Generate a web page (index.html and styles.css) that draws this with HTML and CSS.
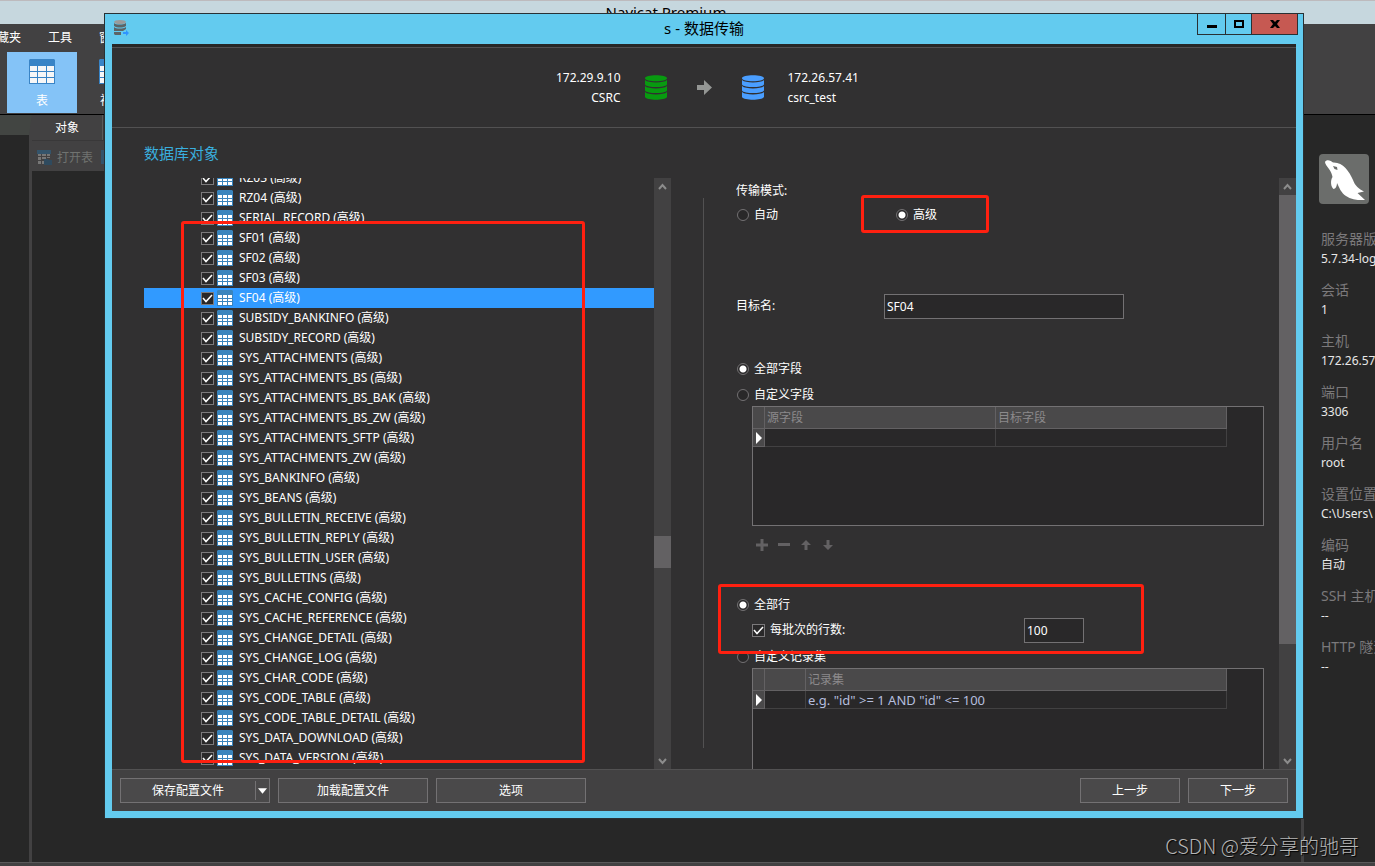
FILE: index.html
```html
<!DOCTYPE html>
<html lang="zh-CN">
<head>
<meta charset="utf-8">
<meta name="viewport" content="width=device-width, initial-scale=1">
<title>Navicat Premium</title>
<link rel="stylesheet" href="styles.css">
</head>
<body>
<svg class="symbols" aria-hidden="true">
  <symbol id="i-table" viewBox="0 0 16 16"><path fill="#3984bd" d="M1 0h14l1 1v15H0V1z"/><path fill="#fff" d="M1 5h4v3H1zM6 5h4v3H6zM11 5h4v3h-4zM1 9h4v2H1zM6 9h4v2H6zM11 9h4v2h-4zM1 12h4v3H1zM6 12h4v3H6zM11 12h4v3h-4z"/></symbol>
  <symbol id="i-table-lg" viewBox="0 0 26 25"><path fill="#3984c6" d="M1 0h24l1 1v24H0V1z"/><path fill="#f7f7f7" d="M1 7h7v5H1zM9 7h8v5H9zM18 7h7v5h-7zM1 13h7v5H1zM9 13h8v5H9zM18 13h7v5h-7zM1 19h7v5H1zM9 19h8v5H9zM18 19h7v5h-7z"/></symbol>
  <symbol id="i-db" viewBox="0 0 22 25"><path d="M0 3.300C0 1.500 5 .300 11 .300s11 1.200 11 3S17 6.300 11 6.300 0 5.100 0 3.300zM0 5c2 1.800 6 2.400 11 2.400S20 6.800 22 5v4.500c-1 1.800-6 2.600-11 2.600S1 11.300 0 9.500zM0 11c2 1.800 6 2.400 11 2.400s9-.600 11-2.400v4.500c-1 1.800-6 2.600-11 2.600S1 17.300 0 15.500zM0 17c2 1.800 6 2.400 11 2.400s9-.600 11-2.400v5c-1 1.800-6 2.700-11 2.700S1 23.800 0 22z"/></symbol>
  <symbol id="i-up" viewBox="0 0 9 8"><path fill="none" stroke="#8c8c8c" stroke-width="2" d="M1 6l3.500-4L8 6"/></symbol>
  <symbol id="i-down" viewBox="0 0 9 8"><path fill="none" stroke="#8c8c8c" stroke-width="2" d="M1 2l3.500 4L8 2"/></symbol>
</svg>

<div class="app">
  <header class="app-title">Navicat Premium</header>
  <nav class="menubar"><a href="#">收藏夹</a><a href="#">工具</a><a href="#">窗口</a></nav>
  <div class="toolbar">
    <button class="tool tool-active"><svg class="tool-icon"><use href="#i-table-lg"/></svg>表</button>
    <button class="tool"><svg class="tool-icon"><use href="#i-table-lg"/></svg>视图</button>
  </div>
  <div class="workspace">
    <aside class="nav-pane"></aside>
    <main class="objects">
      <div class="tabs"><button class="tab">对象</button></div>
      <div class="object-bar">
        <button class="object-tool" disabled><svg class="open-icon" viewBox="0 0 16 16"><path fill="#34546b" d="M0 0h14v4H0z"/><path fill="#777" d="M1 4h3v2H1zM5 4h4v2H5zM10 4h3v2h-3zM1 7h3v3H1zM5 7h4v2H5zM10 7h3v1h-3zM1 11h3v3H1zM5 11h2v3H5z"/><path fill="#2f4a5e" d="M7 9h4l1 1h3v5H7z"/></svg>打开表</button>
        <button class="object-tool" disabled><svg class="open-icon" viewBox="0 0 16 16"><path fill="#34546b" d="M0 0h14v14H0z"/></svg>设计表</button>
      </div>
    </main>
    <aside class="info">
      <svg class="logo" viewBox="0 0 50 50"><path fill="#fff" d="M6 8C7 5 12 6 14 8.500C24 8 30 17 34 26C36 32 40 35 45 37.500L38.500 39L46 46C40 46.500 32 45.500 27 42C22 39 20 33 18 29C18 32 16.500 35 14.500 35C12 33 11 27 13.500 23C13 20 12 18 10 15C8 12 6 10 6 8z"/><path fill="#6b6d6b" d="M14 12l4 1 .500 3-3-1z"/></svg>
      <dl class="facts">
        <dt>服务器版本</dt><dd>5.7.34-log</dd>
        <dt>会话</dt><dd>1</dd>
        <dt>主机</dt><dd>172.26.57.41</dd>
        <dt>端口</dt><dd>3306</dd>
        <dt>用户名</dt><dd>root</dd>
        <dt>设置位置</dt><dd>C:\Users\</dd>
        <dt>编码</dt><dd>自动</dd>
        <dt>SSH 主机</dt><dd>--</dd>
        <dt>HTTP 隧道</dt><dd>--</dd>
      </dl>
    </aside>
  </div>
  <footer class="statusbar"></footer>
</div>

<section class="dialog" role="dialog" aria-labelledby="dialog-title">
  <header class="dialog-title">
    <svg class="dialog-icon" viewBox="0 0 16 16"><path fill="#5d6466" d="M1 3c2 2 9 2 12 0v3c-3 2-9 2-12 0zM1 7c2 2 9 2 12 0v2l-3 2H1zM1 12h7v3H2l-1-1z"/><ellipse cx="7" cy="2" rx="6" ry="2" fill="#9b9b9b"/><path fill="#2f94ff" d="M10 12h3v-2l3 3-3 3v-2h-3z"/></svg>
    <h1 id="dialog-title">s - 数据传输</h1>
    <div class="window-controls">
      <button class="win-btn win-min" aria-label="最小化"><svg viewBox="0 0 10 8"><path d="M0 5h10v3H0z"/></svg></button>
      <button class="win-btn win-max" aria-label="最大化"><svg viewBox="0 0 10 8"><path fill-rule="evenodd" d="M0 0h10v8H0zM2 2v4h6V2z"/></svg></button>
      <button class="win-btn win-close" aria-label="关闭"><svg viewBox="0 0 10 8"><path d="M0 0h3l2 2 2-2h3L7 4l3 4H7L5 6 3 8H0l3-4z"/></svg></button>
    </div>
  </header>

  <div class="dialog-inner">
    <div class="route">
      <p class="source">172.29.9.10<br>CSRC</p>
      <div class="route-icons">
        <svg class="db db-source"><use href="#i-db"/></svg>
        <svg class="arrow" viewBox="0 0 15 15"><path d="M0 5h7V0l8 7.500L7 15v-5H0z"/></svg>
        <svg class="db db-target"><use href="#i-db"/></svg>
      </div>
      <p class="target">172.26.57.41<br>csrc_test</p>
    </div>

    <div class="panes">
      <section class="left-pane">
        <h2>数据库对象</h2>
        <div class="scroll-area">
          <div class="list-view">
          <div class="list">
            <label class="row"><input type="checkbox" class="check" checked><svg class="row-icon"><use href="#i-table"/></svg>RZ03 (高级)</label>
            <label class="row"><input type="checkbox" class="check" checked><svg class="row-icon"><use href="#i-table"/></svg>RZ04 (高级)</label>
            <label class="row"><input type="checkbox" class="check" checked><svg class="row-icon"><use href="#i-table"/></svg>SERIAL_RECORD (高级)</label>
            <label class="row"><input type="checkbox" class="check" checked><svg class="row-icon"><use href="#i-table"/></svg>SF01 (高级)</label>
            <label class="row"><input type="checkbox" class="check" checked><svg class="row-icon"><use href="#i-table"/></svg>SF02 (高级)</label>
            <label class="row"><input type="checkbox" class="check" checked><svg class="row-icon"><use href="#i-table"/></svg>SF03 (高级)</label>
            <label class="row row-selected"><input type="checkbox" class="check" checked><svg class="row-icon"><use href="#i-table"/></svg>SF04 (高级)</label>
            <label class="row"><input type="checkbox" class="check" checked><svg class="row-icon"><use href="#i-table"/></svg>SUBSIDY_BANKINFO (高级)</label>
            <label class="row"><input type="checkbox" class="check" checked><svg class="row-icon"><use href="#i-table"/></svg>SUBSIDY_RECORD (高级)</label>
            <label class="row"><input type="checkbox" class="check" checked><svg class="row-icon"><use href="#i-table"/></svg>SYS_ATTACHMENTS (高级)</label>
            <label class="row"><input type="checkbox" class="check" checked><svg class="row-icon"><use href="#i-table"/></svg>SYS_ATTACHMENTS_BS (高级)</label>
            <label class="row"><input type="checkbox" class="check" checked><svg class="row-icon"><use href="#i-table"/></svg>SYS_ATTACHMENTS_BS_BAK (高级)</label>
            <label class="row"><input type="checkbox" class="check" checked><svg class="row-icon"><use href="#i-table"/></svg>SYS_ATTACHMENTS_BS_ZW (高级)</label>
            <label class="row"><input type="checkbox" class="check" checked><svg class="row-icon"><use href="#i-table"/></svg>SYS_ATTACHMENTS_SFTP (高级)</label>
            <label class="row"><input type="checkbox" class="check" checked><svg class="row-icon"><use href="#i-table"/></svg>SYS_ATTACHMENTS_ZW (高级)</label>
            <label class="row"><input type="checkbox" class="check" checked><svg class="row-icon"><use href="#i-table"/></svg>SYS_BANKINFO (高级)</label>
            <label class="row"><input type="checkbox" class="check" checked><svg class="row-icon"><use href="#i-table"/></svg>SYS_BEANS (高级)</label>
            <label class="row"><input type="checkbox" class="check" checked><svg class="row-icon"><use href="#i-table"/></svg>SYS_BULLETIN_RECEIVE (高级)</label>
            <label class="row"><input type="checkbox" class="check" checked><svg class="row-icon"><use href="#i-table"/></svg>SYS_BULLETIN_REPLY (高级)</label>
            <label class="row"><input type="checkbox" class="check" checked><svg class="row-icon"><use href="#i-table"/></svg>SYS_BULLETIN_USER (高级)</label>
            <label class="row"><input type="checkbox" class="check" checked><svg class="row-icon"><use href="#i-table"/></svg>SYS_BULLETINS (高级)</label>
            <label class="row"><input type="checkbox" class="check" checked><svg class="row-icon"><use href="#i-table"/></svg>SYS_CACHE_CONFIG (高级)</label>
            <label class="row"><input type="checkbox" class="check" checked><svg class="row-icon"><use href="#i-table"/></svg>SYS_CACHE_REFERENCE (高级)</label>
            <label class="row"><input type="checkbox" class="check" checked><svg class="row-icon"><use href="#i-table"/></svg>SYS_CHANGE_DETAIL (高级)</label>
            <label class="row"><input type="checkbox" class="check" checked><svg class="row-icon"><use href="#i-table"/></svg>SYS_CHANGE_LOG (高级)</label>
            <label class="row"><input type="checkbox" class="check" checked><svg class="row-icon"><use href="#i-table"/></svg>SYS_CHAR_CODE (高级)</label>
            <label class="row"><input type="checkbox" class="check" checked><svg class="row-icon"><use href="#i-table"/></svg>SYS_CODE_TABLE (高级)</label>
            <label class="row"><input type="checkbox" class="check" checked><svg class="row-icon"><use href="#i-table"/></svg>SYS_CODE_TABLE_DETAIL (高级)</label>
            <label class="row"><input type="checkbox" class="check" checked><svg class="row-icon"><use href="#i-table"/></svg>SYS_DATA_DOWNLOAD (高级)</label>
            <label class="row"><input type="checkbox" class="check" checked><svg class="row-icon"><use href="#i-table"/></svg>SYS_DATA_VERSION (高级)</label>
          </div>
          </div>
          <div class="scrollbar scrollbar-list">
            <svg class="scroll-arrow"><use href="#i-up"/></svg>
            <div class="scroll-track"><div class="scroll-thumb"></div></div>
            <svg class="scroll-arrow"><use href="#i-down"/></svg>
          </div>
        </div>
      </section>

      <div class="divider"></div>

      <section class="right-pane">
        <form class="form">
          <p class="line mode-title">传输模式:</p>
          <div class="line modes">
            <label class="option"><input type="radio" class="radio" name="mode">自动</label>
            <label class="option"><input type="radio" class="radio" name="mode" checked>高级</label>
          </div>
          <div class="field target-name">
            <label for="target-name">目标名:</label>
            <input id="target-name" class="text-box" type="text" value="SF04">
          </div>
          <label class="line option all-fields"><input type="radio" class="radio" name="fields" checked>全部字段</label>
          <label class="line option custom-fields"><input type="radio" class="radio" name="fields">自定义字段</label>
          <div class="grid-box">
            <table class="grid">
              <colgroup><col class="col-mark"><col><col></colgroup>
              <thead><tr><th></th><th>源字段</th><th>目标字段</th></tr></thead>
              <tbody><tr><td class="mark"><svg class="mark-icon" viewBox="0 0 6 12"><path d="M0 0l6 6-6 6z"/></svg></td><td></td><td></td></tr></tbody>
            </table>
          </div>
          <div class="grid-tools">
            <button type="button" aria-label="添加"><svg viewBox="0 0 12 12"><path d="M4.500 0h3v4.500H12v3H7.500V12h-3V7.500H0v-3h4.500z"/></svg></button>
            <button type="button" aria-label="删除"><svg viewBox="0 0 12 12"><path d="M0 4h12v3H0z"/></svg></button>
            <button type="button" aria-label="上移"><svg viewBox="0 0 12 12"><path d="M6 1l5 5H7.500v5h-3V6H1z"/></svg></button>
            <button type="button" aria-label="下移"><svg viewBox="0 0 12 12"><path d="M6 11L1 6h3.500V1h3v5H11z"/></svg></button>
          </div>
          <label class="line option all-rows"><input type="radio" class="radio" name="rows" checked>全部行</label>
          <div class="field batch">
            <label for="batch-on" class="option"><input id="batch-on" type="checkbox" class="check" checked>每批次的行数:</label>
            <input class="text-box text-box-short" type="text" value="100" aria-label="每批次的行数">
          </div>
          <label class="line option custom-rows"><input type="radio" class="radio" name="rows">自定义记录集</label>
          <div class="grid-box">
            <table class="grid">
              <colgroup><col class="col-mark"><col class="col-check"><col></colgroup>
              <thead><tr><th></th><th></th><th>记录集</th></tr></thead>
              <tbody><tr><td class="mark"><svg class="mark-icon" viewBox="0 0 6 12"><path d="M0 0l6 6-6 6z"/></svg></td><td></td><td class="hint">e.g. "id" &gt;= 1 AND "id" &lt;= 100</td></tr></tbody>
            </table>
          </div>
        </form>
        <div class="scrollbar scrollbar-form">
          <svg class="scroll-arrow"><use href="#i-up"/></svg>
          <div class="scroll-track"><div class="scroll-thumb"></div></div>
          <svg class="scroll-arrow"><use href="#i-down"/></svg>
        </div>
      </section>
    </div>

    <footer class="actions">
      <div class="split">
        <button class="split-main">保存配置文件</button>
        <button class="split-more" aria-label="更多"><svg viewBox="0 0 10 6"><path d="M0 0h10L5 6z"/></svg></button>
      </div>
      <button class="btn">加载配置文件</button>
      <button class="btn">选项</button>
      <span class="spacer"></span>
      <button class="btn btn-nav">上一步</button>
      <button class="btn btn-nav">下一步</button>
    </footer>
  </div>
</section>

<div class="callout callout-list"></div>
<div class="callout callout-mode"></div>
<div class="callout callout-rows"></div>
<p class="watermark">CSDN @爱分享的驰哥</p>
</body>
</html>
```
FILE: styles.css
```css
* { box-sizing: border-box; }
body {
  margin: 0;
  position: relative;
  height: 100vh;
  overflow: hidden;
  background: #272727;
  color: #fff;
  font: 12px/20px "Noto Sans", "Noto Sans CJK SC", sans-serif;
}
h1, h2, p, dl, dd { margin: 0; font-weight: 400; }
button, input { font: inherit; color: inherit; }
button { padding: 0; border: 0; background: none; }
svg { display: block; flex: none; }
.symbols { position: absolute; width: 0; height: 0; }

/* Main window */
.app { display: flex; flex-direction: column; height: 100vh; }
.app-title {
  height: 24px;
  padding-right: 43px;
  border-top: 1px solid #bdbabd;
  background: #c6d7de;
  color: #000;
  font-size: 15px;
  line-height: 22px;
  text-align: center;
}
.menubar { display: flex; gap: 27px; height: 28px; margin-left: -15px; padding-top: 4px; background: #424142; }
.menubar a { color: #fff; text-decoration: none; }
.toolbar { display: flex; height: 63px; padding-left: 7px; background: #424142; border-bottom: 1px solid #000; }
.tool { display: flex; flex-direction: column; align-items: center; width: 70px; height: 61px; padding-top: 7px; gap: 7px; }
.tool-active { background: #84c3f7; }
.tool-icon { width: 26px; height: 25px; }
.workspace { display: flex; flex: 1; min-height: 0; }
.nav-pane { width: 32px; border-top: 20px solid #424542; border-right: 3px solid #424142; }
.objects { flex: 1; border-right: 3px solid #424142; }
.tabs { height: 26px; border-bottom: 1px solid #393839; background: #393839; }
.tab { width: 71px; height: 25px; background: #424142; border-right: 1px solid #5a5a5a; }
.object-bar { display: flex; gap: 8px; height: 30px; padding: 4px 0 0 5px; background: #424142; }
.object-tool { display: flex; align-items: center; gap: 4px; color: #707370; font-size: 12px; }
.open-icon { width: 16px; height: 16px; }
.info { width: 71px; padding: 39px 0 0 15px; white-space: nowrap; overflow: hidden; }
.logo { width: 50px; height: 50px; border-radius: 4px; background: #6b6d6b; }
.facts { padding: 25px 0 0 2px; }
.facts dt { color: #7b797b; font-size: 14px; }
.facts dd { margin-bottom: 11px; color: #e7e7e7; }
.statusbar { height: 4px; border-top: 1px solid #5a595a; background: #424142; }

/* Transfer dialog */
.dialog {
  position: absolute;
  inset: 13px 71px 47px 104px;
  display: flex;
  flex-direction: column;
  padding: 0 7px 7px;
  border: 1px solid #293033;
  background: #63cbef;
}
.dialog-title { display: grid; grid-template-columns: 1fr auto 1fr; height: 30px; color: #000; }
.dialog-icon { width: 16px; height: 16px; margin: 6px 0 0 1px; }
.dialog-title h1 { font-size: 15px; line-height: 29px; }
.window-controls { display: flex; justify-content: flex-end; align-items: flex-start; margin: -1px -2px 0 0; }
.win-btn { display: grid; place-items: center; height: 22px; border: 1px solid #293033; }
.win-btn svg { width: 10px; height: 8px; }
.win-min { width: 28px; border-right: 0; }
.win-max { width: 27px; }
.win-close { width: 46px; border-left: 0; background: #c65952; }
.dialog-inner { display: flex; flex-direction: column; flex: 1; min-height: 0; border-top: 3px solid #272727; background: #313031; }
.route {
  display: grid;
  grid-template-columns: 1fr auto 1fr;
  align-items: center;
  column-gap: 24px;
  height: 81px;
  border: solid #525152;
  border-width: 1px 0;
}
.source { text-align: right; }
.route-icons { display: flex; align-items: center; gap: 30px; }
.db { width: 22px; height: 25px; }
.db-source { fill: #089a10; }
.db-target { fill: #4a9eff; }
.arrow { width: 15px; height: 15px; fill: #949694; }
.panes { display: grid; grid-template-columns: 559fr 1px 560fr; column-gap: 32px; flex: 1; min-height: 0; }
.left-pane { display: flex; flex-direction: column; min-height: 0; padding-left: 32px; }
.left-pane h2 { height: 50px; padding-top: 15px; color: #39aede; font-size: 15px; }
.scroll-area { display: flex; flex: 1; min-height: 0; }
.list-view { flex: 1; overflow: hidden; margin-bottom: 3px; }
.list { margin-top: -10px; }
.row { display: flex; height: 20px; padding-left: 57px; white-space: nowrap; }
.row-selected { background: #319aff; }
.row .check { margin: 4px 3px 0 0; }
.row-icon { width: 16px; height: 16px; margin: 2px 6px 0 0; }
.check {
  flex: none;
  appearance: none;
  width: 13px;
  height: 13px;
  margin: 0;
  border: 1px solid #7b797b;
  background: #292829 url("data:image/svg+xml,%3Csvg xmlns='http://www.w3.org/2000/svg' viewBox='0 0 11 11'%3E%3Cpath d='M1 5l3 3.500L10 2' fill='none' stroke='white' stroke-width='1.500'/%3E%3C/svg%3E");
}
.radio {
  flex: none;
  appearance: none;
  width: 12px;
  height: 12px;
  margin: 0;
  border: 1px solid #737173;
  border-radius: 50%;
  background: #292829;
}
.radio:checked { background: radial-gradient(circle, #fff 3px, #292829 4px); }
.divider { margin: 70px 0 21px; background: #525152; }
.right-pane { display: flex; min-height: 0; padding-top: 50px; }
.form { flex: 1; min-width: 0; overflow: hidden; padding: 3px 15px 0 0; }
.line { height: 20px; }
.option { display: flex; align-items: center; gap: 5px; padding-left: 1px; }
.modes { display: grid; grid-template-columns: 159px 1fr; margin-top: 4px; }
.field { display: grid; align-items: center; height: 26px; }
.target-name { grid-template-columns: 148px 240px; margin-top: 68px; }
.text-box { width: 100%; height: 25px; padding: 0 2px; border: 1px solid #737173; background: #292829; }
.all-fields { margin-top: 40px; }
.custom-fields { margin-top: 6px; }
.grid-box { height: 120px; margin: 1px 0 0 16px; border: 1px solid #737173; background: #292829; }
.grid { width: calc(100% - 36px); table-layout: fixed; border-spacing: 0; }
.col-mark { width: 12px; }
.col-check { width: 41px; }
.grid th, .grid td { padding: 0 0 0 2px; border: solid #424142; border-width: 0 1px 1px 0; text-align: left; font-weight: 400; }
.grid th { height: 22px; border-color: #636163; background: #4a494a; color: #8c8a8c; }
.grid td { height: 18px; line-height: 16px; }
.grid .mark { padding: 0 0 0 3px; border-color: #636163; background: #4a494a; }
.mark-icon { width: 6px; height: 12px; fill: #fff; }
.grid .hint { color: #b5bede; font-size: 13px; }
.grid-tools { display: flex; align-items: center; gap: 10px; height: 20px; margin: 9px 0 0 20px; }
.grid-tools svg { width: 12px; height: 12px; fill: #636163; }
.all-rows { margin-top: 40px; }
.batch { grid-template-columns: 272px 60px; margin: 2px 0 0 16px; }
.batch .option { padding-left: 0; }
.custom-rows { margin-top: 4px; }
.scrollbar { display: flex; flex-direction: column; width: 17px; background: #424142; }
.scroll-arrow { width: 9px; height: 8px; margin: 5px 4px 4px; }
.scroll-track { display: grid; flex: 1; }
.scroll-thumb { background: #636163; }
.scrollbar-list .scroll-track { grid-template-rows: 341fr 32fr 184fr; }
.scrollbar-list .scroll-thumb { grid-row: 2; }
.scrollbar-form .scroll-track { grid-template-rows: 449fr 108fr; }
.actions { display: flex; gap: 8px; padding: 8px; border-top: 1px solid #525152; background: #424142; }
.btn, .split { width: 150px; height: 25px; border: 1px solid #737173; background: #4a494a; }
.btn-nav { width: 100px; }
.split { display: flex; padding: 2px 0; }
.split-main { flex: 1; border-right: 1px solid #737173; line-height: 19px; }
.split-more { display: grid; place-items: center; width: 13px; }
.split-more svg { width: 9px; height: 6px; fill: #fff; }
.spacer { flex: 1; }

/* Marks laid over the windows */
.callout { position: absolute; border: 3px solid #ff2010; border-radius: 3px; pointer-events: none; }
.callout-list { left: 181px; top: 221px; width: 404px; height: 542px; }
.callout-mode { left: 861px; top: 195px; width: 128px; height: 38px; }
.callout-rows { left: 718px; top: 584px; width: 426px; height: 70px; }
.watermark {
  position: absolute;
  right: 16px;
  bottom: 6px;
  color: #b5b5b5;
  font-family: "Noto Sans CJK SC", sans-serif;
  font-size: 20px;
  font-weight: 300;
  line-height: 28px;
  text-shadow: 1px 1px 1px #000;
}
```
